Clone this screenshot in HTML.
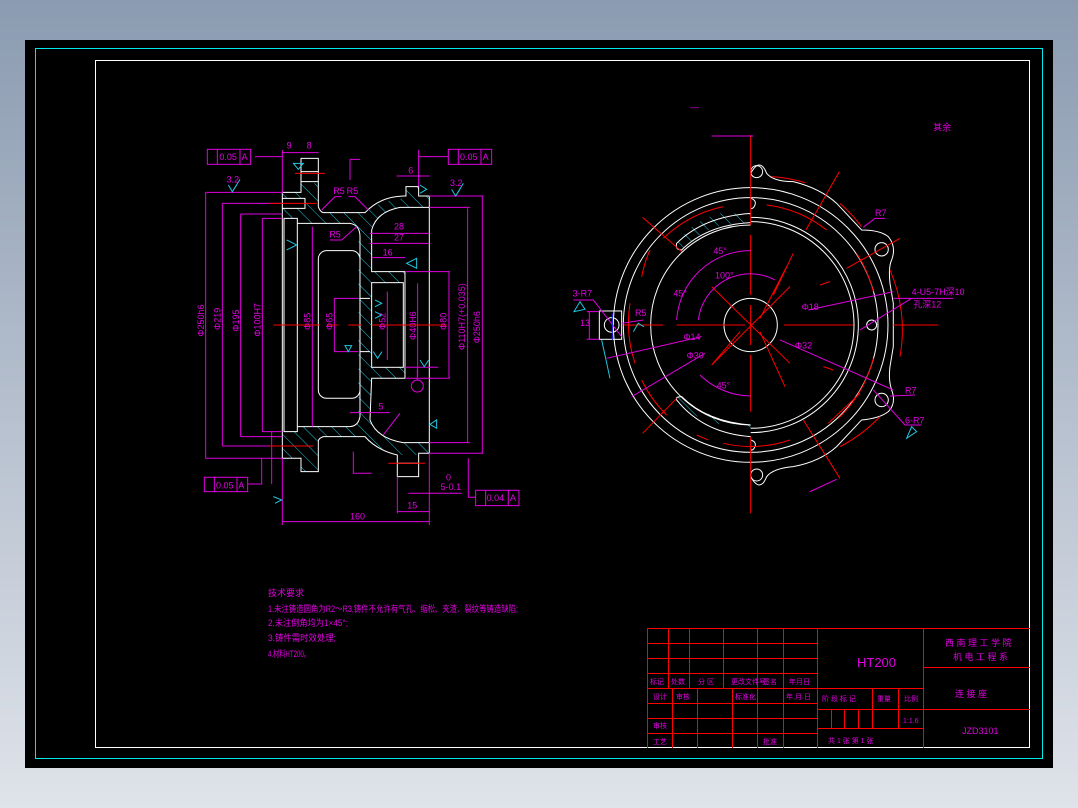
<!DOCTYPE html>
<html><head><meta charset="utf-8"><style>
html,body{margin:0;padding:0}
body{width:1078px;height:808px;overflow:hidden;background:linear-gradient(#8b9bb1,#dfe3ea);position:relative}
svg{position:absolute;left:0;top:0}
text{font-family:"Liberation Sans","Noto Sans CJK SC",sans-serif}
</style></head><body>
<svg width="1078" height="808" viewBox="0 0 1078 808">
<defs>
<pattern id="h" patternUnits="userSpaceOnUse" width="30" height="30" patternTransform="rotate(-45)">
<line x1="0" y1="0" x2="0" y2="30" stroke="#1ec8e0" stroke-width="3"/></pattern>
</defs>
<rect x="25" y="40" width="1028" height="728" fill="#000"/>
<rect x="35.5" y="48.5" width="1007" height="710" fill="none" stroke="#00e8e8" stroke-width="1"/>
<rect x="95.5" y="60.5" width="934" height="687" fill="none" stroke="#fff" stroke-width="1"/>

<!-- LEFT SECTION VIEW -->
<g transform="translate(190,130) scale(0.3333)" fill="none" stroke-width="3">
 <!-- hatches -->
 <g fill="url(#h)" stroke="none">
  <path d="M333,160 L385,160 L385,230 L400,248 L525,248 Q560,215 640,205 L648,200 L648,170 L686,170 L686,198 L718,198 L718,232 L630,232 Q570,240 545,300 L545,425 L645,425 L645,458 L545,458 L545,712 L645,712 L645,745 L545,745 L540,870 Q560,920 640,938 L718,938 L718,970 L686,970 L686,975 L622,975 Q560,960 525,920 L400,920 L385,930 L385,1025 L333,1025 L333,985 L277,985 L277,905 L322,905 L322,890 L490,890 Q505,880 505,860 L505,320 Q505,282 480,280 L322,280 L322,265 L277,265 L277,235 L345,235 L345,205 L277,205 L277,187 L333,187 Z"/>
 </g>
 <g stroke="#fff">
  <path d="M277,187 L333,187 L333,85 L385,85 L385,230 Q390,245 400,248 L525,248 Q570,200 640,198 L648,198 L648,170 L686,170 L686,198 L718,198 L718,970 L686,970 L686,1040 L622,1040 L622,975 Q560,960 525,920 L400,920 Q385,925 385,935 L385,1025 L333,1025 L333,985 L277,985 Z"/>
  <path d="M282,265 L322,265 L322,905 L282,905 Z"/>
  <path d="M322,280 L480,280 Q510,285 510,320 L510,860 Q505,888 480,890 L322,890"/>
  <rect x="385" y="362" width="125" height="443" rx="25"/>
  <path d="M718,232 L630,232 Q560,245 545,300 L545,425 L645,425 L645,745 L545,745 L540,870 Q560,925 640,938 L718,938"/>
  <rect x="545" y="458" width="95" height="254"/>
  <path d="M510,505 L540,505 M510,665 L540,665 M277,205 L345,205 L345,235 L277,235 M622,1000 L686,1000 M333,125 L385,125 M333,155 L385,155"/>
 </g>
 <g stroke="#e000e0">
  <path d="M47,187 L47,985 M97,220 L97,948 M152,252 L152,920 M217,265 L217,905 M367,290 L367,890 M433,505 L433,665 M592,485 L592,690 M683,460 L683,740 M777,425 L777,745 M833,235 L833,938 M877,198 L877,970"/>
  <path d="M47,187 L277,187 M97,220 L277,220 M152,252 L277,252 M217,265 L277,265 M47,985 L277,985 M97,948 L277,948 M152,920 L277,920 M217,905 L277,905 M433,505 L505,505 M433,665 L505,665 M718,232 L840,232 M718,938 L840,938 M718,198 L880,198 M718,970 L880,970 M645,425 L780,425 M645,745 L780,745 M645,712 L745,712"/>
  <path d="M277,1175 L718,1175 M277,985 L277,1185 M718,970 L718,1185 M622,1145 L718,1145 M622,1040 L622,1150 M540,310 L718,310 M540,340 L718,340 M545,383 L645,383 M277,68 L385,68 M277,60 L277,190 M686,60 L686,170 M620,138 L718,138 M655,1090 L815,1090"/>
  <path d="M195,80 L277,80 M686,80 L775,80 M215,985 L215,1062 L173,1062 M245,905 L245,1062 M835,985 L835,1102 L857,1102 M455,200 L435,200 L395,240 M475,200 L495,200 L535,240 M420,330 L455,330 L500,290 M480,848 L600,848 M630,850 L580,915"/>
  <path d="M480,88 L480,150 M480,88 L510,88 M490,965 L490,1030 L545,1030"/>
  <rect x="52" y="58" width="130" height="45"/><path d="M82,58 L82,103 M150,58 L150,103"/>
  <rect x="775" y="58" width="130" height="45"/><path d="M805,58 L805,103 M873,58 L873,103"/>
  <rect x="43" y="1042" width="130" height="43"/><path d="M73,1042 L73,1085 M141,1042 L141,1085"/>
  <rect x="857" y="1081" width="130" height="46"/><path d="M887,1081 L887,1127 M955,1081 L955,1127"/>
  <circle cx="682" cy="768" r="18"/><path d="M682,718 L682,750"/>
 </g>
 <g stroke="#f00">
  <path d="M250,585 L390,585 M410,585 L445,585 M475,585 L515,585 M545,585 L770,585 M315,130 L405,130 M240,220 L380,220 M240,948 L370,948 M595,1000 L705,1000"/>
 </g>
 <g stroke="#1ec8e0">
  <path d="M310,100 L325,118 L340,100 Z M115,165 L127,185 L140,165 M127,185 L150,148 M785,178 L797,198 L810,178 M797,198 L820,160 M290,330 L320,345 L290,360 M465,647 L475,665 L485,647 Z M550,665 L563,685 L576,665 M690,690 L703,710 L716,690 M650,400 L680,385 L680,415 Z M720,883 L740,870 L740,895 Z M250,1100 L275,1110 L255,1120 M555,510 L575,520 L555,530 M555,545 L575,555 L555,565 M690,165 L710,178 L690,190"/>
 </g>
 <g fill="#e000e0" stroke="none" font-size="27">
  <text x="290" y="56">9</text><text x="350" y="56">8</text>
  <text x="88" y="90">0.05</text><text x="155" y="90">A</text>
  <text x="810" y="90">0.05</text><text x="878" y="90">A</text>
  <text x="78" y="1075">0.05</text><text x="145" y="1075">A</text>
  <text x="890" y="1113">0.04</text><text x="960" y="1113">A</text>
  <text x="430" y="192">R5</text><text x="470" y="192">R5</text><text x="418" y="322">R5</text>
  <text x="612" y="298">28</text><text x="612" y="332">27</text><text x="578" y="376">16</text>
  <text x="655" y="130">6</text><text x="565" y="838">5</text>
  <text x="480" y="1168">160</text><text x="652" y="1135">15</text>
  <text x="768" y="1052">0</text><text x="752" y="1080">5-0.1</text>
  <text x="110" y="158">3.2</text><text x="780" y="168">3.2</text>
  <g transform="rotate(-90)">
   <text x="-620" y="42">Φ250h6</text><text x="-600" y="92">Φ219</text><text x="-605" y="147">Φ195</text>
   <text x="-620" y="212">Φ100H7</text><text x="-600" y="362">Φ85</text><text x="-600" y="428">Φ65</text>
   <text x="-600" y="587">Φ52</text><text x="-630" y="678">Φ40H6</text><text x="-600" y="770">Φ80</text>
   <text x="-660" y="825">Φ110H7(+0.035)</text><text x="-640" y="870">Φ250h6</text>
  </g>
 </g>
</g>

<!-- RIGHT VIEW -->
<g transform="translate(560,110) scale(0.3333)" fill="none" stroke-width="3">
 <g fill="url(#h)" stroke="none">
  <path d="M572,310 L480,310 Q400,330 350,400 Q345,420 365,420 Q420,360 500,342 L572,338 Z"/>
  <path d="M572,945 L490,945 Q400,930 350,870 Q345,860 365,860 Q420,910 500,930 L572,980 Z"/>
 </g>
 <g stroke="#fff">
  <path d="M572,190 Q600,140 620,190 Q640,215 700,215 Q780,235 830,280 L905,360 Q960,360 985,380 Q1010,410 995,450 Q985,470 990,520 L1000,580 L1000,710 L990,770 Q985,810 995,840 Q1010,880 985,905 Q960,925 905,930 L830,1010 Q780,1055 700,1070 Q640,1075 620,1100 Q600,1150 572,1100"/>
  <circle cx="572" cy="645" r="412"/>
  <circle cx="572" cy="645" r="382"/>
  <path d="M572,322 A323,323 0 1 1 572,968"/>
  <path d="M572,335 A310,310 0 1 1 572,955"/>
  <path d="M572,345 A300,300 0 1 0 572,945"/>
  <path d="M572,310 Q430,320 350,400 Q345,420 365,420 Q440,345 572,338"/>
  <path d="M572,980 Q430,970 350,870 Q345,860 365,860 Q440,935 572,945"/>
  <circle cx="572" cy="645" r="80"/>
  <circle cx="965" cy="418" r="20"/><circle cx="965" cy="870" r="20"/><circle cx="935" cy="645" r="15"/>
  <circle cx="590" cy="185" r="18"/><circle cx="590" cy="1095" r="18"/>
  <path d="M572,265 Q590,270 585,285 Q580,298 572,295 M572,990 Q590,995 585,1010 Q580,1022 572,1020"/>
  <rect x="118" y="603" width="67" height="85"/><circle cx="155" cy="645" r="22"/>
 </g>
 <g stroke="#f00">
  <path d="M572,75 L572,345 M572,375 L572,555 M572,585 L572,705 M572,735 L572,905 M572,980 L572,1210 M190,645 L310,645 M350,645 L555,645 M672,645 L880,645 M1000,645 L1135,645"/>
  <path d="M248,322 L365,425 M455,530 L690,760 M455,765 L690,530 M838,185 L738,360 M700,430 L640,555 M680,470 L600,625 M540,665 L455,765 M600,665 L675,830 M730,930 L840,1105 M1020,385 L860,475 M810,515 L780,525 M350,865 L248,970 M900,850 L805,940 M790,770 L820,780"/>
  <path d="M310,385 A370,370 0 0 1 490,290 M620,285 A365,365 0 0 1 800,360 M270,420 A380,380 0 0 0 245,500 M210,580 A380,380 0 0 0 225,760 M245,810 A370,370 0 0 0 320,915 M410,975 A370,370 0 0 0 445,990 M490,1000 A365,365 0 0 0 690,990 M835,925 A375,375 0 0 0 940,745 M940,545 A370,370 0 0 0 890,430 M635,200 A450,450 0 0 1 735,218 M840,280 A450,450 0 0 1 905,350 M990,480 A450,450 0 0 1 1020,740 M960,920 A450,450 0 0 1 840,1010"/>
 </g>
 <g stroke="#e000e0">
  <path d="M350,630 A222,222 0 0 1 572,422 M415,630 A157,157 0 0 1 645,510 M420,795 A220,220 0 0 0 572,858"/>
  <path d="M140,745 L425,680 M215,860 L435,730 M745,600 L1000,545 M1000,565 L1180,565 M1055,565 L900,660 M660,690 L1000,840 M910,352 L945,325 L975,325 M990,858 L1065,855 M940,840 L1035,945 L1085,945 M750,1145 L830,1108 M455,78 L580,78 M40,570 L100,570 L185,680 M88,605 L88,688 M80,605 L118,605 M80,688 L118,688 M185,640 L250,630"/>
 </g>
 <g stroke="#1ec8e0"><path d="M42,605 L60,575 L75,598 Z M220,665 L235,640 L252,650 M125,690 L150,805 M1040,985 L1055,950 L1070,965 Z"/></g>
 <path d="M157,610 L157,690" stroke="#2020ff"/>
 <g fill="#e000e0" stroke="none" font-size="27">
  <text x="460" y="432">45°</text><text x="465" y="505">100°</text><text x="470" y="835">45°</text><text x="340" y="560">45°</text>
  <text x="370" y="690">Φ14</text><text x="380" y="745">Φ30</text><text x="725" y="600">Φ18</text><text x="705" y="715">Φ32</text>
  <text x="1055" y="555">4-U5-7H深10</text><text x="1060" y="593">孔深12</text>
  <text x="945" y="318">R7</text><text x="1035" y="850">R7</text><text x="1035" y="940">6-R7</text>
  <text x="38" y="560">3-R7</text><text x="225" y="618">R5</text><text x="60" y="648">13</text>
  <text x="1120" y="62">其余</text>
 </g>
</g>

<!-- notes -->
<g fill="#e000e0" font-size="9">
 <text x="268" y="596">技术要求</text>
 <text x="268" y="612" textLength="250" lengthAdjust="spacingAndGlyphs">1.未注铸造圆角为R2～R3,铸件不允许有气孔、缩松、夹渣、裂纹等铸造缺陷;</text>
 <text x="268" y="626" textLength="80" lengthAdjust="spacingAndGlyphs">2.未注倒角均为1×45°;</text>
 <text x="268" y="641" textLength="68" lengthAdjust="spacingAndGlyphs">3.铸件需时效处理;</text>
 <text x="268" y="657" textLength="42" lengthAdjust="spacingAndGlyphs">4.材料HT200。</text>
 <text x="690" y="110">—</text>
</g>

<!-- title block -->
<g stroke="#f00" stroke-width="1" fill="none">
 <path d="M647,628.5 L1030,628.5 M647.5,628 L647.5,748 M817.5,628 L817.5,748 M923.5,628 L923.5,748"/>
 <path d="M647,643.5 L817,643.5 M647,658.5 L817,658.5 M647,673.5 L817,673.5 M647,688.5 L923,688.5 M647,703.5 L817,703.5 M647,718.5 L817,718.5 M647,733.5 L817,733.5"/>
 <path d="M668.5,628 L668.5,688 M689.5,628 L689.5,688 M723.5,628 L723.5,688 M757.5,628 L757.5,748 M783.5,628 L783.5,748"/>
 <path d="M672.5,688 L672.5,748 M697.5,688 L697.5,748 M732.5,688 L732.5,748"/>
 <path d="M817,709.5 L923,709.5 M817,728.5 L923,728.5 M872.5,688 L872.5,728 M898.5,688 L898.5,728 M831.5,709 L831.5,728 M844.5,709 L844.5,728 M858.5,709 L858.5,728"/>
 <path d="M923,667.5 L1030,667.5 M923,709.5 L1030,709.5"/>
</g>
<g fill="#e000e0" font-size="7">
 <text x="650" y="684">标记</text><text x="671" y="684">处数</text><text x="698" y="684">分 区</text><text x="731" y="684">更改文件号</text><text x="763" y="684">签名</text><text x="789" y="684">年月日</text>
 <text x="653" y="699">设计</text><text x="676" y="699">审核</text><text x="735" y="699">标准化</text><text x="786" y="699">年.月.日</text>
 <text x="653" y="728">审核</text><text x="653" y="744">工艺</text><text x="763" y="744">批准</text>
 <text x="822" y="701">阶 段 标 记</text><text x="877" y="701">重量</text><text x="904" y="701">比例</text>
 <text x="903" y="723">1:1.6</text><text x="828" y="743">共 1 张   第 1 张</text>
 <text x="857" y="667" font-size="13">HT200</text>
 <text x="945" y="646" font-size="9">西 南 理 工 学 院</text>
 <text x="953" y="660" font-size="9">机 电 工 程 系</text>
 <text x="955" y="697" font-size="9">连 接 座</text>
 <text x="962" y="734" font-size="9">JZD3101</text>
</g>
</svg>
</body></html>
